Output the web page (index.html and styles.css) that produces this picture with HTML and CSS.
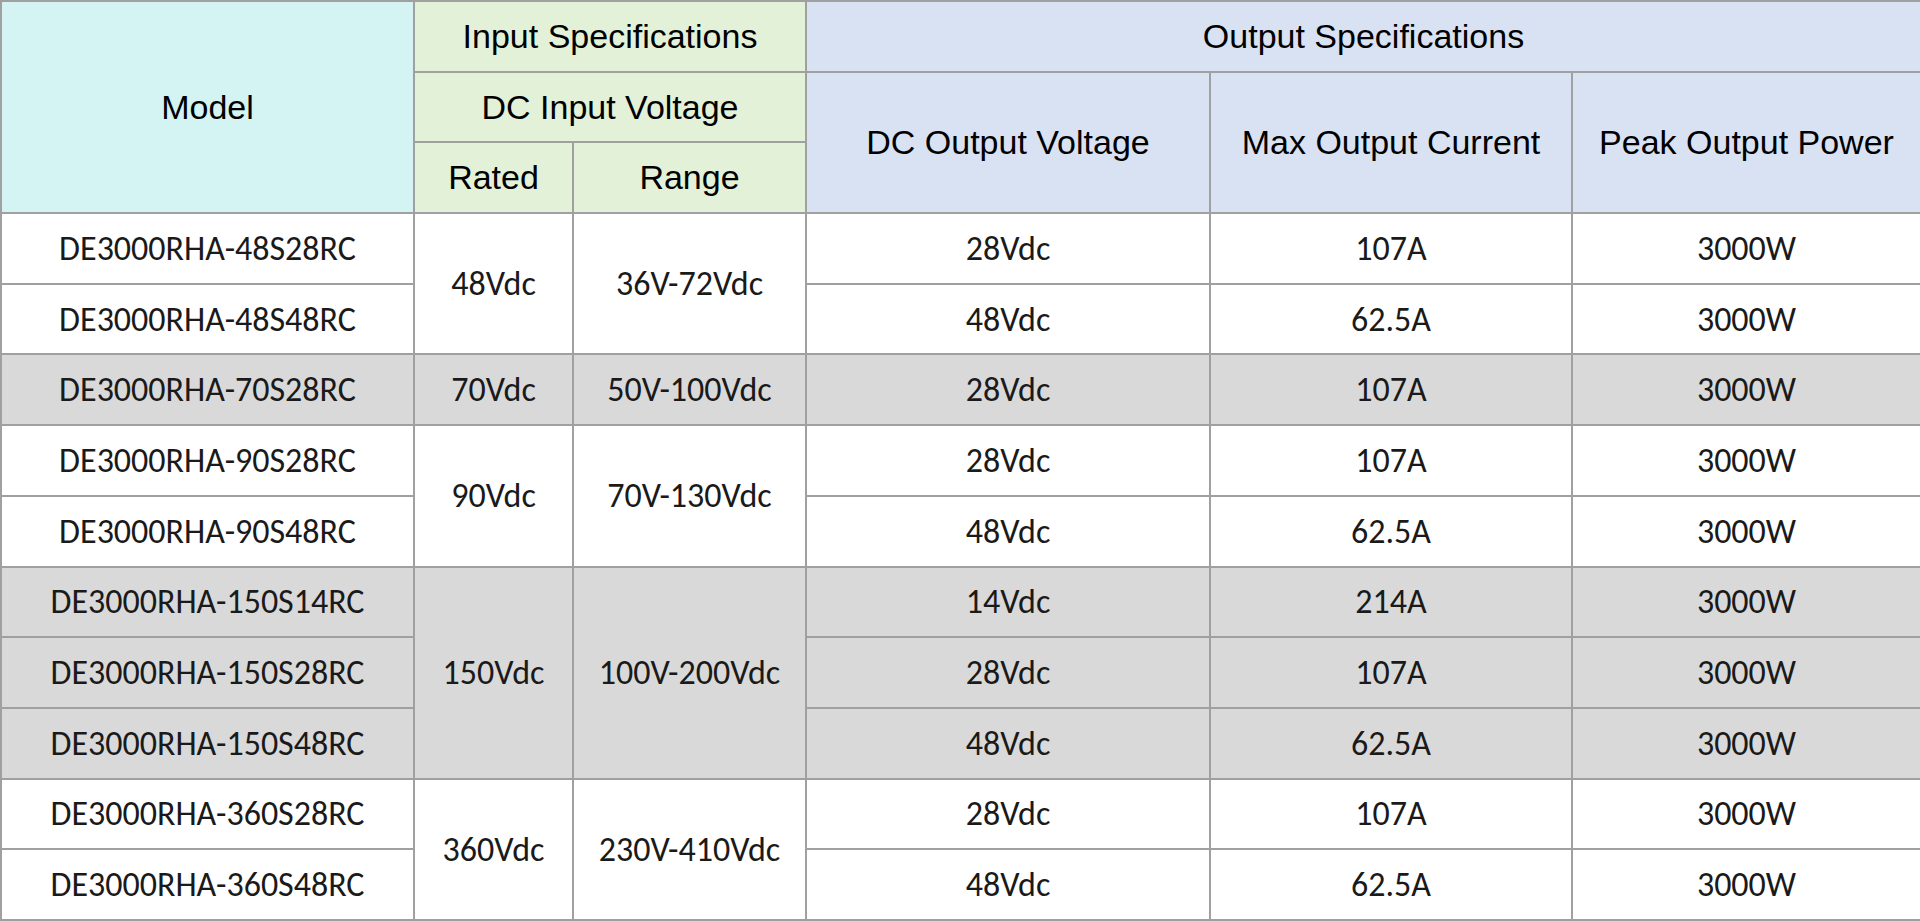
FILE: index.html
```html
<!DOCTYPE html>
<html lang="en">
<head>
<meta charset="utf-8">
<title>DE3000RHA Specifications</title>
<link rel="stylesheet" href="styles.css">
</head>
<body>
<table class="spec">
  <colgroup>
    <col class="c-model">
    <col class="c-rated">
    <col class="c-range">
    <col class="c-vout">
    <col class="c-iout">
    <col class="c-pout">
  </colgroup>
  <thead>
    <tr>
      <th rowspan="3" class="h-model">Model</th>
      <th colspan="2" class="h-in">Input Specifications</th>
      <th colspan="3" class="h-out">Output Specifications</th>
    </tr>
    <tr>
      <th colspan="2" class="h-in">DC Input Voltage</th>
      <th rowspan="2" class="h-out">DC Output Voltage</th>
      <th rowspan="2" class="h-out">Max Output Current</th>
      <th rowspan="2" class="h-out">Peak Output Power</th>
    </tr>
    <tr>
      <th class="h-in">Rated</th>
      <th class="h-in">Range</th>
    </tr>
  </thead>
  <tbody>
    <tr>
      <td>DE3000RHA-48S28RC</td>
      <td rowspan="2">48Vdc</td>
      <td rowspan="2">36V-72Vdc</td>
      <td>28Vdc</td><td>107A</td><td>3000W</td>
    </tr>
    <tr>
      <td>DE3000RHA-48S48RC</td>
      <td>48Vdc</td><td>62.5A</td><td>3000W</td>
    </tr>
    <tr class="shade">
      <td>DE3000RHA-70S28RC</td>
      <td>70Vdc</td>
      <td>50V-100Vdc</td>
      <td>28Vdc</td><td>107A</td><td>3000W</td>
    </tr>
    <tr>
      <td>DE3000RHA-90S28RC</td>
      <td rowspan="2">90Vdc</td>
      <td rowspan="2">70V-130Vdc</td>
      <td>28Vdc</td><td>107A</td><td>3000W</td>
    </tr>
    <tr>
      <td>DE3000RHA-90S48RC</td>
      <td>48Vdc</td><td>62.5A</td><td>3000W</td>
    </tr>
    <tr class="shade">
      <td>DE3000RHA-150S14RC</td>
      <td rowspan="3">150Vdc</td>
      <td rowspan="3">100V-200Vdc</td>
      <td>14Vdc</td><td>214A</td><td>3000W</td>
    </tr>
    <tr class="shade">
      <td>DE3000RHA-150S28RC</td>
      <td>28Vdc</td><td>107A</td><td>3000W</td>
    </tr>
    <tr class="shade">
      <td>DE3000RHA-150S48RC</td>
      <td>48Vdc</td><td>62.5A</td><td>3000W</td>
    </tr>
    <tr>
      <td>DE3000RHA-360S28RC</td>
      <td rowspan="2">360Vdc</td>
      <td rowspan="2">230V-410Vdc</td>
      <td>28Vdc</td><td>107A</td><td>3000W</td>
    </tr>
    <tr>
      <td>DE3000RHA-360S48RC</td>
      <td>48Vdc</td><td>62.5A</td><td>3000W</td>
    </tr>
  </tbody>
</table>
</body>
</html>
```
FILE: styles.css
```css
html, body {
  margin: 0;
  padding: 0;
  background: #ffffff;
}

.spec {
  width: 1920px;
  height: 919px;
  border-collapse: collapse;
  table-layout: fixed;
  border: 2px solid #a0a0a0;
}

.c-model { width: 413px; }
.c-rated { width: 159px; }
.c-range { width: 233px; }
.c-vout  { width: 404px; }
.c-iout  { width: 362px; }
.c-pout  { width: 349px; }

.spec tr {
  height: 70.7px;
}

.spec th,
.spec td {
  border: 2px solid #a0a0a0;
  padding: 0;
  text-align: center;
  vertical-align: middle;
  white-space: nowrap;
  color: #000;
}

.spec th {
  font-family: "Liberation Sans", Arial, sans-serif;
  font-size: 34px;
  font-weight: normal;
}

.spec td {
  font-family: "Carlito", "Open Sans", sans-serif;
  font-size: 34px;
  color: #1a1a1a;
  background: #ffffff;
}

.h-model { background: #d3f4f3; }
.h-in    { background: #e3f1d9; }
.h-out   { background: #d9e2f3; }

.spec tr.shade td {
  background: #d9d9d9;
}
```
